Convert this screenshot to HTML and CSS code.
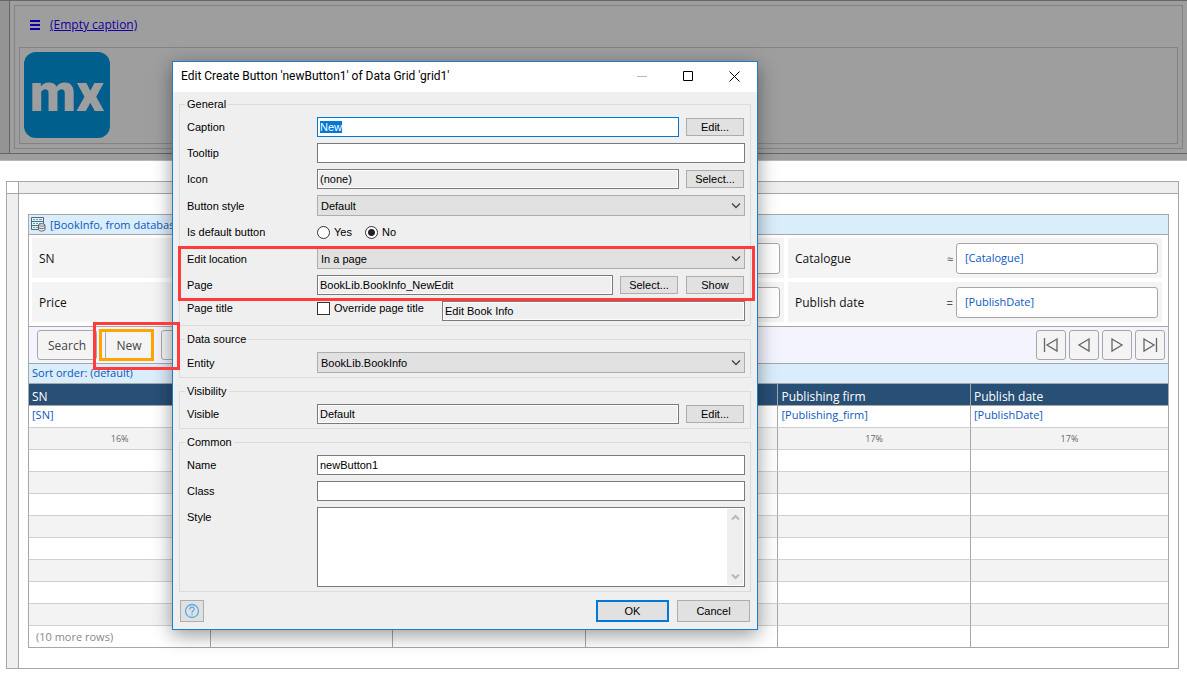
FILE: index.html
```html
<!DOCTYPE html>
<html lang="en">
<head>
    <meta charset="UTF-8">
    <meta name="viewport" content="width=device-width, initial-scale=1.0">
    <title>Edit Create Button</title>
    <link rel="stylesheet" href="styles.css">
</head>
<body>
    <!-- layout part, greyed out -->
    <header class="layout">
        <div class="layout-side"></div>
        <div class="layout-main">
            <div class="layout-box">
                <a class="menu-link" href="#">
                    <svg width="10" height="10" viewBox="0 0 10 10"><path d="M0 1h10M0 5h10M0 9h10" stroke="#0d00a8" stroke-width="2"/></svg>
                    <span>(Empty caption)</span>
                </a>
                <div class="logo-box">
                    <svg width="86" height="86" viewBox="0 0 86 86">
                        <rect width="86" height="86" rx="12" fill="#005f8c"/>
                        <text x="43" y="59" class="logo-text">mx</text>
                    </svg>
                </div>
            </div>
        </div>
    </header>

    <main class="frame">
        <div class="corner"></div>
        <div class="ruler-top"></div>
        <div class="ruler-left"></div>
        <div class="canvas">
            <div class="grid">
                <div class="source">
                    <svg width="15" height="15" viewBox="0 0 15 15">
                        <path d="M.5.5h12v12H.5zM.5 4.500h12M.5 8.500h12" fill="#e6f4fc" stroke="#5b6670"/>
                        <path d="M2 2.500h2m1 0h2m1 0h3M2 6.500h2m1 0h2m1 0h3M2 10.500h2m1 0h2" stroke="#48a0d8"/>
                        <path d="M7.500 8v4.500c0 2 6.500 2 6.500 0V8z" fill="#eee" stroke="#5b6670"/>
                        <ellipse cx="10.750" cy="8" rx="3.250" ry="1.200" fill="#fff" stroke="#5b6670"/>
                        <path d="M7.500 10.500c1 1.500 5.500 1.500 6.500 0" fill="none" stroke="#5b6670"/>
                    </svg>
                    <span>[BookInfo, from database]</span>
                </div>

                <div class="search">
                    <div class="search-cell"><label for="s1">SN</label><input id="s1" type="text"></div>
                    <div class="search-cell"><label for="s2"></label><input id="s2" type="text"></div>
                    <div class="search-cell"><label for="s3">Catalogue</label><i>≈</i><input id="s3" type="text" value="[Catalogue]"></div>
                    <div class="search-cell"><label for="s4">Price</label><input id="s4" type="text"></div>
                    <div class="search-cell"><label for="s5"></label><input id="s5" type="text"></div>
                    <div class="search-cell"><label for="s6">Publish date</label><i>=</i><input id="s6" type="text" value="[PublishDate]"></div>
                </div>

                <div class="toolbar">
                    <div class="tools">
                        <button class="tool tool-search">Search</button>
                        <button class="tool tool-new">New<span class="mark-orange"></span><span class="mark-red"></span></button>
                        <button class="tool tool-new"></button>
                    </div>
                    <div class="pager">
                        <button aria-label="First"><svg width="16" height="16" viewBox="0 0 16 16"><path d="M1.500 1v14M14 2L4 8l10 6z"/></svg></button>
                        <button aria-label="Previous"><svg width="16" height="16" viewBox="0 0 16 16"><path d="M13 2L3 8l10 6z"/></svg></button>
                        <button aria-label="Next"><svg width="16" height="16" viewBox="0 0 16 16"><path d="M3 2l10 6-10 6z"/></svg></button>
                        <button aria-label="Last"><svg width="16" height="16" viewBox="0 0 16 16"><path d="M14.500 1v14M2 2l10 6-10 6z"/></svg></button>
                    </div>
                </div>

                <div class="sort">Sort order: (default)</div>

                <table>
                    <colgroup>
                        <col class="c16"><col class="c16"><col class="c17"><col class="c17"><col class="c17"><col>
                    </colgroup>
                    <thead>
                        <tr><th>SN</th><th></th><th></th><th></th><th>Publishing firm</th><th>Publish date</th></tr>
                    </thead>
                    <tbody>
                        <tr class="attr"><td>[SN]</td><td></td><td></td><td></td><td>[Publishing_firm]</td><td>[PublishDate]</td></tr>
                        <tr class="pct"><td>16%</td><td></td><td></td><td></td><td>17%</td><td>17%</td></tr>
                        <tr><td></td><td></td><td></td><td></td><td></td><td></td></tr>
                        <tr><td></td><td></td><td></td><td></td><td></td><td></td></tr>
                        <tr><td></td><td></td><td></td><td></td><td></td><td></td></tr>
                        <tr><td></td><td></td><td></td><td></td><td></td><td></td></tr>
                        <tr><td></td><td></td><td></td><td></td><td></td><td></td></tr>
                        <tr><td></td><td></td><td></td><td></td><td></td><td></td></tr>
                        <tr><td></td><td></td><td></td><td></td><td></td><td></td></tr>
                        <tr><td></td><td></td><td></td><td></td><td></td><td></td></tr>
                        <tr class="more"><td>(10 more rows)</td><td></td><td></td><td></td><td></td><td></td></tr>
                    </tbody>
                </table>
            </div>
        </div>
    </main>

    <!-- dialog window -->
    <form class="dialog">
        <div class="titlebar">
            <h1>Edit Create Button 'newButton1' of Data Grid 'grid1'</h1>
            <button type="button" class="min" aria-label="Minimize"><svg width="11" height="11" viewBox="0 0 11 11"><path d="M0 5.500h10"/></svg></button>
            <button type="button" aria-label="Maximize"><svg width="11" height="11" viewBox="0 0 11 11"><path d="M.5.5h9v9h-9z"/></svg></button>
            <button type="button" aria-label="Close"><svg width="11" height="11" viewBox="0 0 11 11"><path d="M.5.5l10 10M10.500.5l-10 10"/></svg></button>
        </div>

        <div class="dialog-body">
            <fieldset>
                <legend>General</legend>
                <div class="row">
                    <label for="caption">Caption</label>
                    <input id="caption" type="text" value="New">
                    <button type="button">Edit...</button>
                </div>
                <div class="row">
                    <label for="tooltip">Tooltip</label>
                    <input id="tooltip" type="text">
                </div>
                <div class="row">
                    <label for="icon">Icon</label>
                    <input id="icon" type="text" value="(none)" readonly>
                    <button type="button">Select...</button>
                </div>
                <div class="row">
                    <label for="bstyle">Button style</label>
                    <div class="combo">
                        <select id="bstyle"><option>Default</option></select>
                        <svg width="10" height="6" viewBox="0 0 10 6"><path d="M1 .5l4 4 4-4"/></svg>
                    </div>
                </div>
                <div class="row">
                    <span class="row-label">Is default button</span>
                    <label class="choice"><input type="radio" name="isdef">Yes</label>
                    <label class="choice"><input type="radio" name="isdef" checked>No</label>
                </div>
                <div class="row">
                    <label for="editloc">Edit location</label>
                    <div class="combo">
                        <select id="editloc"><option>In a page</option></select>
                        <svg width="10" height="6" viewBox="0 0 10 6"><path d="M1 .5l4 4 4-4"/></svg>
                    </div>
                </div>
                <div class="row">
                    <label for="page">Page</label>
                    <input id="page" type="text" value="BookLib.BookInfo_NewEdit" readonly>
                    <button type="button">Select...</button>
                    <button type="button">Show</button>
                </div>
                <div class="row row-top">
                    <label for="ptitle">Page title</label>
                    <label class="choice choice-wide"><input type="checkbox">Override page title</label>
                    <input id="ptitle" type="text" value="Edit Book Info" readonly>
                </div>
            </fieldset>

            <fieldset>
                <legend>Data source</legend>
                <div class="row">
                    <label for="entity">Entity</label>
                    <div class="combo">
                        <select id="entity"><option>BookLib.BookInfo</option></select>
                        <svg width="10" height="6" viewBox="0 0 10 6"><path d="M1 .5l4 4 4-4"/></svg>
                    </div>
                </div>
            </fieldset>

            <fieldset>
                <legend>Visibility</legend>
                <div class="row">
                    <label for="visible">Visible</label>
                    <input id="visible" type="text" value="Default" readonly>
                    <button type="button">Edit...</button>
                </div>
            </fieldset>

            <fieldset>
                <legend>Common</legend>
                <div class="row">
                    <label for="name">Name</label>
                    <input id="name" type="text" value="newButton1">
                </div>
                <div class="row">
                    <label for="class">Class</label>
                    <input id="class" type="text">
                </div>
                <div class="row row-area">
                    <label for="style">Style</label>
                    <div class="area">
                        <textarea id="style"></textarea>
                        <div class="scrollbar">
                            <svg width="9" height="7" viewBox="0 0 9 7"><path d="M1 5.500l3.500-3.500L8 5.500"/></svg>
                            <svg width="9" height="7" viewBox="0 0 9 7"><path d="M1 1.500L4.500 5 8 1.500"/></svg>
                        </div>
                    </div>
                </div>
            </fieldset>

            <div class="footer">
                <button type="button" class="help" aria-label="Help">
                    <svg width="16" height="16" viewBox="0 0 16 16"><circle cx="8" cy="8" r="6.500"/><path d="M5.800 6.400c0-3 4.400-3 4.400-.3 0 1.600-2.200 1.700-2.200 3.600M8 10.800v1.400"/></svg>
                </button>
                <button type="submit" class="ok">OK</button>
                <button type="button">Cancel</button>
            </div>
        </div>
        <div class="mark-page"></div>
    </form>

    <script>
        // caption starts out focused with its text selected
        const caption = document.getElementById('caption');
        caption.focus();
        caption.select();
    </script>
</body>
</html>
```
FILE: styles.css
```css
:root {
    --line: #a7a7a7;
    --link: #0b58c0;
    --ui: "Open Sans", "Noto Sans", sans-serif;
    --dialog: "Liberation Sans", Arial, sans-serif;
}

* {
    box-sizing: border-box;
}

body {
    position: relative;
    margin: 0;
    background: #fff;
    font-family: var(--ui);
    font-size: 12px;
    color: #111;
}

button, input, select, textarea {
    margin: 0;
    font: inherit;
    color: inherit;
}

svg {
    display: block;
    flex: none;
}

/* greyed layout */
.layout {
    display: grid;
    grid-template-columns: 10px 1fr;
    background: #9e9e9e;
    border-top: 1px solid #666;
    padding-bottom: 6px;
    border-bottom: 1px solid #b8b8b8;
}

.layout-side {
    background: #949494;
    border-right: 1px solid #666;
    border-bottom: 1px solid #666;
}

.layout-main {
    padding: 4px;
    border-bottom: 1px solid #666;
}

.layout-box {
    padding: 4px;
    border: 1px solid #838383;
}

.menu-link {
    display: flex;
    align-items: center;
    gap: 10px;
    height: 37px;
    padding: 0 0 8px 11px;
    color: #1300a0;
    text-decoration: none;
}

.menu-link span {
    text-decoration: underline;
}

.logo-box {
    padding: 4px;
    height: 97px;
    border: 1px solid #838383;
}

.logo-text {
    font: 900 54px Roboto, sans-serif;
    text-anchor: middle;
    fill: #9e9e9e;
}

/* page canvas */
.frame {
    display: grid;
    grid-template: 12px 1fr / 12px 1fr;
    margin: 20px 8px 0 6px;
    border: 1px solid var(--line);
}

.corner,
.ruler-left {
    border-right: 1px solid var(--line);
}

.corner,
.ruler-top {
    border-bottom: 1px solid var(--line);
}

.ruler-top,
.ruler-left {
    background: #efefef;
}

.canvas {
    padding: 20px 9px;
}

.grid {
    border: 1px solid var(--line);
}

.source,
.sort {
    display: flex;
    align-items: center;
    height: 20px;
    padding: 0 3px 2px;
    background: #daedfa;
    border-bottom: 1px solid var(--line);
    color: var(--link);
    font-size: 11px;
    white-space: nowrap;
}

.source {
    align-items: flex-end;
    gap: 4px;
    padding-left: 2px;
}

.search {
    display: grid;
    grid-template-columns: repeat(3, 1fr);
    gap: 4px;
    padding: 3px 6px 4px 3px;
    border-bottom: 1px solid var(--line);
}

.search-cell {
    display: flex;
    align-items: center;
    gap: 3px;
    height: 40px;
    padding: 0 4px 0 7px;
    background: #f4f4f4;
}

.search-cell label {
    flex: 1;
}

.search-cell i {
    padding-top: 2px;
    font: 11px var(--dialog);
    color: #555;
}

.search-cell input {
    width: 202px;
    height: 31px;
    padding: 0 8px 2px;
    border: 1px solid var(--line);
    border-radius: 3px;
    background: #fff;
    color: var(--link);
    font-size: 11px;
}

.toolbar {
    display: flex;
    align-items: center;
    justify-content: space-between;
    height: 37px;
    padding: 0 3px 0 8px;
    background: #f4f4fe;
    border-bottom: 1px solid var(--line);
}

.tools {
    display: flex;
    gap: 8px;
}

.tool,
.pager button {
    height: 30px;
    padding: 0;
    border: 1px solid var(--line);
    border-radius: 3px;
    background: #f4f4f4;
    color: #444;
}

.tool-search {
    width: 60px;
}

.tool-new {
    position: relative;
    width: 48px;
}

.mark-orange,
.mark-red,
.mark-page {
    position: absolute;
    border: 3px solid #ff3b3b;
    pointer-events: none;
}

.mark-orange {
    inset: -2px -2px -2px -7px;
    border-color: #ffa500;
}

.mark-red {
    z-index: 3;
    inset: -9px -28px -11px -13px;
}

.pager {
    display: flex;
    gap: 3px;
}

.pager button {
    display: grid;
    place-items: center;
    width: 30px;
}

.pager svg {
    fill: none;
    stroke: #666;
    stroke-width: 1.3;
}

table {
    width: 100%;
    table-layout: fixed;
    border-spacing: 0;
}

.c16 {
    width: 16%;
}

.c17 {
    width: 16.9%;
}

th, td {
    height: 22px;
    padding: 0 3px;
    border-right: 1px solid var(--line);
    border-bottom: 1px solid #d0d0d0;
    line-height: 16px;
    text-align: left;
    font-weight: normal;
    white-space: nowrap;
}

th:last-child,
td:last-child {
    border-right: 0;
}

th {
    padding-top: 4px;
    background: #284f76;
    border-bottom-color: var(--line);
    color: #fff;
}

tbody tr:nth-child(even) {
    background: #f3f3f3;
}

.attr td {
    padding-bottom: 4px;
    color: var(--link);
    font-size: 11px;
}

.pct td {
    text-align: center;
    color: #666;
    font-size: 9px;
}

.more td {
    height: 21px;
    padding-left: 7px;
    border-bottom: 0;
    color: #888;
    font-size: 11px;
}

/* dialog window */
.dialog {
    position: absolute;
    z-index: 2;
    top: 61px;
    left: 172px;
    width: 586px;
    border: 1px solid #1a7fd0;
    background: #efefef;
    box-shadow: 0 5px 18px rgba(0, 0, 0, 0.4);
    font-family: var(--dialog);
    font-size: 11px;
    color: #000;
}

.titlebar {
    display: flex;
    height: 30px;
    padding-left: 8px;
    background: #fff;
}

.titlebar h1 {
    flex: 1;
    margin: 0;
    font: 12px/29px Roboto, var(--ui);
}

.titlebar button {
    display: grid;
    place-items: center;
    width: 46px;
    height: 28px;
    padding: 0;
    border: 0;
    background: none;
}

.titlebar svg {
    fill: none;
    stroke: #000;
}

.titlebar .min svg {
    stroke: #bbb;
}

.dialog-body {
    padding: 6px;
}

fieldset {
    display: flex;
    flex-direction: column;
    gap: 6px;
    min-width: 0;
    margin: 0 0 7px;
    padding: 6px 5px 4px 7px;
    border: 1px solid #dcdcdc;
}

legend {
    margin-left: -2px;
    padding: 0 2px;
    line-height: 13px;
}

.row {
    display: flex;
    align-items: center;
    min-height: 20px;
}

.row > label:first-child,
.row-label {
    flex: none;
    width: 130px;
}

.row input[type="text"],
textarea {
    flex: 1;
    min-width: 0;
    height: 20px;
    padding: 0 2px;
    border: 1px solid #7a7a7a;
    border-radius: 0;
    background: #fff;
    outline: 0;
}

.row input[readonly] {
    padding: 0 2px;
    background: #efefef;
    box-shadow: inset 0 0 0 1px #fff;
}

.row input[type="text"]:focus {
    border-color: #0078d7;
}

.row input::selection {
    background: #0078d7;
    color: #fff;
}

.dialog-body button {
    padding: 0;
    border: 1px solid #adadad;
    background: #e1e1e1;
}

.row button {
    width: 58px;
    height: 18px;
    margin: 0 1px 0 7px;
}

.combo {
    position: relative;
    flex: 1;
}

.combo select {
    display: block;
    width: 100%;
    height: 21px;
    padding: 0 3px;
    border: 1px solid #adadad;
    border-radius: 0;
    background: #e1e1e1;
    appearance: none;
}

.combo svg {
    position: absolute;
    top: 8px;
    right: 4px;
    fill: none;
    stroke: #444;
    stroke-width: 1.3;
    pointer-events: none;
}

.choice {
    display: flex;
    align-items: center;
    gap: 4px;
    margin-right: 13px;
}

.choice input {
    appearance: none;
    width: 13px;
    height: 13px;
    border: 1px solid #333;
    background: #fff;
}

.choice input[type="radio"] {
    border-radius: 50%;
}

.choice input[type="radio"]:checked {
    background: radial-gradient(circle, #222 3px, #fff 4px);
}

.row-top {
    align-items: flex-start;
    line-height: 15px;
}

.choice-wide {
    width: 125px;
    margin: 0;
}

.row-area {
    align-items: flex-start;
    line-height: 20px;
}

.area {
    position: relative;
    flex: 1;
}

.area textarea {
    display: block;
    width: 100%;
    height: 80px;
    resize: none;
}

.scrollbar {
    position: absolute;
    top: 2px;
    right: 2px;
    bottom: 2px;
    display: flex;
    flex-direction: column;
    align-items: center;
    justify-content: space-between;
    width: 16px;
    padding: 5px 0;
    background: #efefef;
}

.scrollbar svg {
    fill: none;
    stroke: #b8b8b8;
    stroke-width: 2;
}

.footer {
    display: flex;
    gap: 8px;
    padding: 1px;
}

.footer button {
    width: 73px;
    height: 22px;
}

.footer .ok {
    border: 2px solid #0078d7;
}

.footer .help {
    display: grid;
    place-items: center;
    width: 24px;
    margin-right: auto;
}

.help svg {
    fill: none;
    stroke: #55aee8;
    stroke-width: 1.3;
}

.mark-page {
    top: 184px;
    left: 5px;
    right: 2px;
    height: 55px;
}
```
